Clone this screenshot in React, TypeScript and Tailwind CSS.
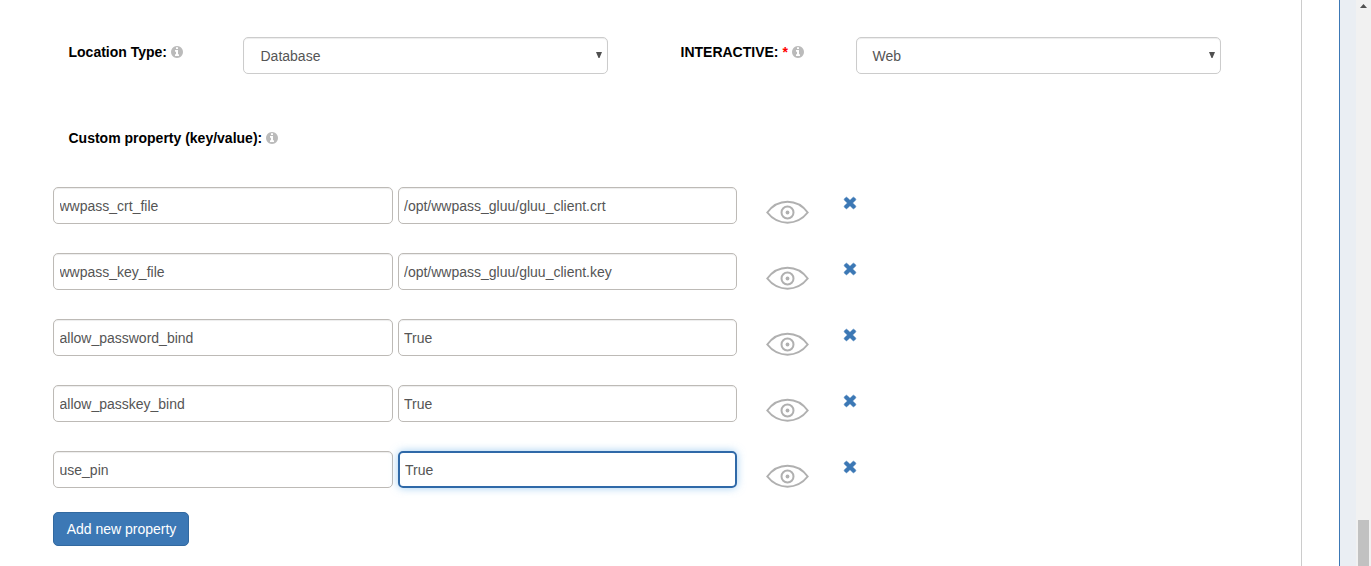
import React from 'react';

const rows = [
  ['wwpass_crt_file', '/opt/wwpass_gluu/gluu_client.crt'],
  ['wwpass_key_file', '/opt/wwpass_gluu/gluu_client.key'],
  ['allow_password_bind', 'True'],
  ['allow_passkey_bind', 'True'],
  ['use_pin', 'True'],
];

function Info() {
  return (
    <svg className="h-3 w-3 shrink-0" viewBox="0 0 1536 1536" fill="#bbb">
      <path d="M1024 1248v-160q0-14-9-23t-23-9h-96V544q0-14-9-23t-23-9H544q-14 0-23 9t-9 23v160q0 14 9 23t23 9h96v320h-96q-14 0-23 9t-9 23v160q0 14 9 23t23 9h448q14 0 23-9t9-23zM896 352V192q0-14-9-23t-23-9H672q-14 0-23 9t-9 23v160q0 14 9 23t23 9h192q14 0 23-9t9-23zm640 416q0 209-103 385.500T1153.500 1433 768 1536t-385.500-103T103 1153.500 0 768t103-385.500T382.500 103 768 0t385.500 103T1433 382.500 1536 768z" />
    </svg>
  );
}

function Eye() {
  return (
    <svg className="mt-[13px] ml-[29px] h-6 w-[43px] shrink-0" viewBox="0 0 43 24" fill="none" stroke="#b0b0b0">
      <path d="M1.300 12.500C12 -1.700 31 -1.700 41.700 12.500C31 26 12 26 1.300 12.500Z" strokeWidth="2" />
      <circle cx="21.500" cy="12.500" r="6" strokeWidth="2" />
      <circle cx="21.500" cy="12.500" r="1.900" fill="#b0b0b0" stroke="none" />
    </svg>
  );
}

function Remove() {
  return (
    <svg className="mt-[10px] ml-[35px] h-3 w-3 shrink-0 overflow-visible" viewBox="-20 -20 1228 1228" fill="#3c78b5" stroke="#3c78b5" strokeWidth="50">
      <path d="M1188 956q0 40-28 68l-136 136q-28 28-68 28t-68-28L594 866l-294 294q-28 28-68 28t-68-28L28 1024Q0 996 0 956t28-68l294-294L28 300Q0 272 0 232t28-68L164 28Q192 0 232 0t68 28l294 294L888 28q28-28 68-28t68 28l136 136q28 28 28 68t-28 68L866 594l294 294q28 28 28 68z" />
    </svg>
  );
}

function Select({ value, pad }: { value: string; pad: string }) {
  return (
    <div className={`flex h-[37px] w-[365px] shrink-0 items-center justify-between rounded-[5px] border border-[#ccc] pr-[5px] text-[#555] shadow-[inset_0_1px_1px_rgba(0,0,0,0.075)] ${pad}`}>
      <span>{value}</span>
      <svg className="mb-[2px] h-[6px] w-[6px]" viewBox="0 0 6 6" fill="#505050">
        <path d="M0 0h6L3.500 6h-1Z" />
      </svg>
    </div>
  );
}

const input = 'h-[37px] shrink-0 rounded-[5px] text-[14px] text-[#555] outline-none';
const plain = 'border border-[#bdbab6] shadow-[inset_0_1px_1px_rgba(0,0,0,0.075)]';
const focused = 'border-2 border-[#2f69a8] shadow-[0_0_8px_rgba(102,175,233,0.6)]';

export default function App() {
  return (
    <div className="flex h-[566px] w-[1371px] overflow-hidden bg-white font-['Liberation_Sans',Arial,sans-serif] text-[14px] leading-5 text-black">
      <main className="w-[1302px] shrink-0 border-r border-[#ccc] pt-[37px] pl-[53px]">
        <div className="flex">
          <div className="flex w-[190px] shrink-0 gap-1 pt-[5px] pl-[15.500px]">
            <b>Location Type:</b>
            <span className="pt-1"><Info /></span>
          </div>
          <Select value="Database" pad="pl-[16.500px]" />
          <div className="flex w-[248px] shrink-0 gap-1 pt-[5px] pl-[72.500px]">
            <b>INTERACTIVE: <span className="text-[#f00]">*</span></b>
            <span className="pt-1"><Info /></span>
          </div>
          <Select value="Web" pad="pl-[15.500px]" />
        </div>
        <div className="mt-[54px] flex gap-1 pl-[15.500px]">
          <b>Custom property (key/value):</b>
          <span className="pt-1"><Info /></span>
        </div>
        <div className="mt-[39px] flex flex-col gap-[29px]">
          {rows.map(([key, value], i) => (
            <div key={key} className="flex h-[37px] items-start">
              <input className={`${input} ${plain} w-[340px] px-[5.500px]`} defaultValue={key} />
              <input className={`${input} ${i === 4 ? focused : plain} ml-[5px] w-[339px] px-[5px]`} defaultValue={value} />
              <Eye />
              <Remove />
            </div>
          ))}
        </div>
        <button className="mt-6 h-[34px] w-[136px] rounded-[5px] border border-[#3269a0] bg-[#3c78b5] pl-[1px] text-white">Add new property</button>
      </main>
      <div className="w-[38px] shrink-0 border-r border-[#3c78b5]" />
      <div className="w-4 shrink-0 bg-[#eaeef3]" />
      <div className="flex w-[15px] shrink-0 flex-col bg-[#f1f1f1]">
        <svg className="mt-1 ml-1 h-1 w-[7px]" viewBox="0 0 7 4" fill="#505050">
          <path d="M3.500 0L7 4H0Z" />
        </svg>
        <div className="mt-auto ml-[2px] h-[46px] w-[11px] bg-[#c1c1c1]" />
      </div>
    </div>
  );
}
